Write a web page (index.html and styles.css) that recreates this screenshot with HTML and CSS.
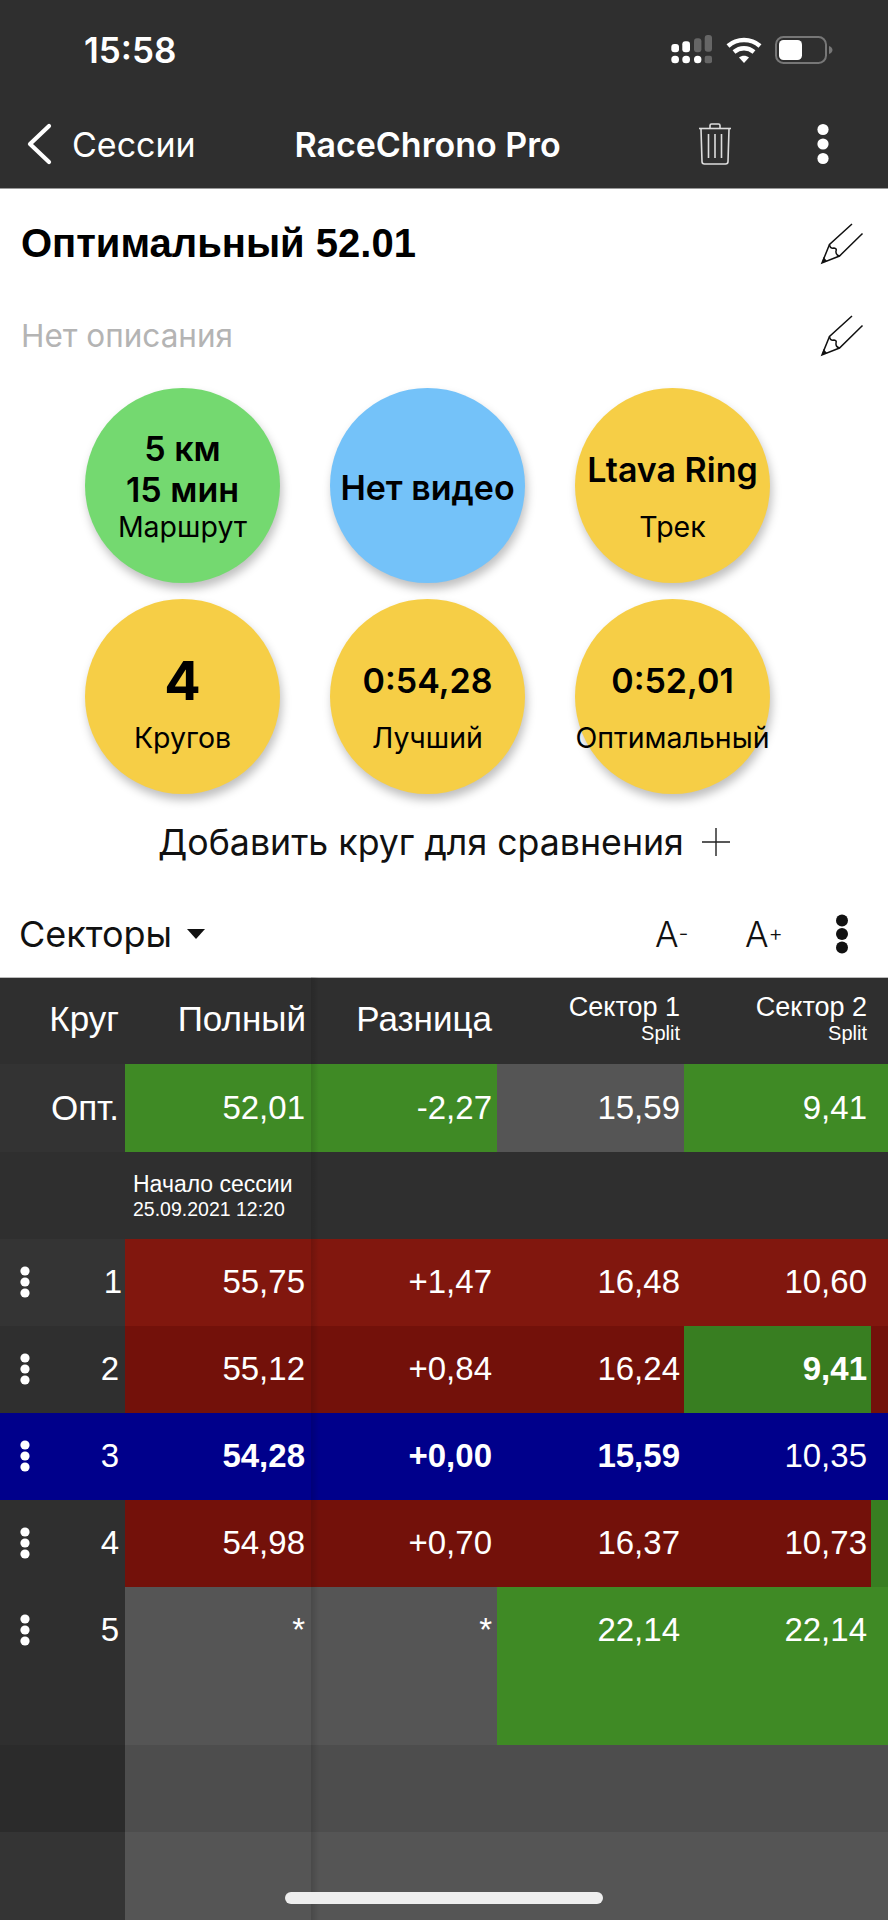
FILE: index.html
```html
<!DOCTYPE html>
<html>
<head>
  <meta charset="UTF-8">
  <title>RaceChrono Pro</title>
  <link rel="stylesheet" href="styles.css">
</head>
<body>

  <header class="top">
    <div class="status">
      <span class="time">15:58</span>
      <div class="status-icons">
        <svg width="42" height="30" viewBox="0 0 42 30">
          <g fill="#fff">
            <rect x="0.3" y="9" width="7.7" height="8.3" rx="3"/>
            <rect x="11.3" y="6.3" width="7.7" height="11" rx="3"/>
            <rect x="0.3" y="20.7" width="7.7" height="7.6" rx="3.6"/>
            <rect x="11.3" y="20.7" width="7.7" height="7.6" rx="3.6"/>
            <rect x="23" y="20.7" width="7.4" height="7.6" rx="3.6"/>
          </g>
          <g fill="#666">
            <rect x="23" y="3.3" width="7.4" height="14" rx="3"/>
            <rect x="33.7" y="0" width="7.3" height="16.7" rx="3"/>
            <rect x="33.7" y="20.7" width="7.3" height="7.6" rx="2"/>
          </g>
        </svg>
        <svg class="wifi" width="36" height="26" viewBox="0 0 36 26">
          <path d="M2 9 C11 1 25 1 34 9" fill="none" stroke="#fff" stroke-width="4.4"/>
          <path d="M8 15 C14 10 22 10 28 15" fill="none" stroke="#fff" stroke-width="4.4"/>
          <path d="M13 20.5 C16 18.2 20 18.2 23 20.5 L18 26 Z" fill="#fff"/>
        </svg>
        <svg class="battery" width="58" height="28" viewBox="0 0 58 28">
          <rect x="1" y="1" width="50" height="26" rx="7.5" fill="none" stroke="#777" stroke-width="2"/>
          <rect x="4" y="4" width="23" height="20" rx="4.5" fill="#fff"/>
          <path d="M54 10 C56.5 11 57.5 12.5 57.5 14 C57.5 15.5 56.5 17 54 18 Z" fill="#777"/>
        </svg>
      </div>
    </div>
    <nav class="nav">
      <div class="nav-left">
        <svg width="26" height="42" viewBox="0 0 26 42">
          <path d="M23 3 L4 21 L23 39" fill="none" stroke="#fff" stroke-width="4.2" stroke-linecap="round" stroke-linejoin="round"/>
        </svg>
        <span>Сессии</span>
      </div>
      <div class="nav-title">RaceChrono Pro</div>
      <div class="nav-right">
        <svg width="34" height="42" viewBox="0 0 34 42">
          <g fill="none" stroke="#ddd" stroke-width="1.6">
            <path d="M1 5.5 H33"/>
            <path d="M12 5 V2.5 Q12 1 13.5 1 H20.5 Q22 1 22 2.5 V5"/>
            <path d="M3 6 L4 38.5 Q4 41 6.5 41 H27.5 Q30 41 30 38.5 L31 6"/>
            <path d="M10.5 11 V35 M17 11 V35 M23.5 11 V35"/>
          </g>
        </svg>
        <svg width="12" height="42" viewBox="0 0 12 42">
          <circle cx="6" cy="6.5" r="5.6" fill="#fff"/>
          <circle cx="6" cy="21" r="5.6" fill="#fff"/>
          <circle cx="6" cy="35.5" r="5.6" fill="#fff"/>
        </svg>
      </div>
    </nav>
  </header>

  <section class="info">
    <div class="title-row">
      <h1>Оптимальный 52.01</h1>
      <svg class="pencil" width="44" height="44" viewBox="0 0 44 44">
        <g fill="none" stroke="#111" stroke-width="1.5">
          <path d="M32 3 L9.5 23.5 L2 42 L19.5 35 L42.5 12.5"/>
          <path d="M9.5 23.5 Q10 28 14 27 Q17 27.5 16 30 Q15.5 34 19.5 35"/>
        </g>
        <path d="M2 42 L3.5 36 L7 40 Z" fill="#111"/>
      </svg>
    </div>
    <div class="desc-row">
      <span>Нет описания</span>
      <svg class="pencil" width="44" height="44" viewBox="0 0 44 44">
        <g fill="none" stroke="#111" stroke-width="1.5">
          <path d="M32 3 L9.5 23.5 L2 42 L19.5 35 L42.5 12.5"/>
          <path d="M9.5 23.5 Q10 28 14 27 Q17 27.5 16 30 Q15.5 34 19.5 35"/>
        </g>
        <path d="M2 42 L3.5 36 L7 40 Z" fill="#111"/>
      </svg>
    </div>

    <div class="circles">
      <div class="circle green">
        <div class="value">5 км<br>15 мин</div>
        <div class="label">Маршрут</div>
      </div>
      <div class="circle blue">
        <div class="value only">Нет видео</div>
      </div>
      <div class="circle yellow">
        <div class="value">Ltava Ring</div>
        <div class="label">Трек</div>
      </div>
      <div class="circle yellow">
        <div class="value big">4</div>
        <div class="label">Кругов</div>
      </div>
      <div class="circle yellow">
        <div class="value">0:54,28</div>
        <div class="label">Лучший</div>
      </div>
      <div class="circle yellow">
        <div class="value">0:52,01</div>
        <div class="label">Оптимальный</div>
      </div>
    </div>

    <div class="add-row">
      <span>Добавить круг для сравнения</span>
      <svg width="28" height="28" viewBox="0 0 28 28">
        <path d="M0 14 H28 M14 0 V28" stroke="#222" stroke-width="1.4"/>
      </svg>
    </div>

    <div class="toolbar">
      <div class="toolbar-left">
        <span>Секторы</span>
        <svg width="18" height="10" viewBox="0 0 18 10"><path d="M0 0 H18 L9 10 Z" fill="#111"/></svg>
      </div>
      <div class="toolbar-right">
        <span class="font-btn">A<small>-</small></span>
        <span class="font-btn">A<small>+</small></span>
        <svg width="14" height="40" viewBox="0 0 14 40">
          <circle cx="7" cy="6.5" r="6" fill="#111"/>
          <circle cx="7" cy="20" r="6" fill="#111"/>
          <circle cx="7" cy="33.5" r="6" fill="#111"/>
        </svg>
      </div>
    </div>
  </section>

  <section class="table">
    <div class="row head">
      <div class="cell">Круг</div>
      <div class="cell">Полный</div>
      <div class="cell">Разница</div>
      <div class="cell stack"><span>Сектор 1</span><small>Split</small></div>
      <div class="cell stack"><span>Сектор 2</span><small>Split</small></div>
      <div class="cell"></div>
    </div>

    <div class="row opt">
      <div class="cell side">Опт.</div>
      <div class="cell bg-green">52,01</div>
      <div class="cell bg-green">-2,27</div>
      <div class="cell bg-gray">15,59</div>
      <div class="cell bg-green">9,41</div>
      <div class="cell bg-green"></div>
    </div>

    <div class="row session">
      <div class="session-text">
        <span>Начало сессии</span>
        <small>25.09.2021 12:20</small>
      </div>
    </div>

    <div class="row lap">
      <div class="cell side lighter"><svg class="dots" width="10" height="32" viewBox="0 0 10 32"><circle cx="5" cy="5" r="4.6"/><circle cx="5" cy="16" r="4.6"/><circle cx="5" cy="27" r="4.6"/></svg><span class="num one">1</span></div>
      <div class="cell bg-red1">55,75</div>
      <div class="cell bg-red1">+1,47</div>
      <div class="cell bg-red1">16,48</div>
      <div class="cell bg-red1">10,60</div>
      <div class="cell bg-red1"></div>
    </div>
    <div class="row lap">
      <div class="cell side"><svg class="dots" width="10" height="32" viewBox="0 0 10 32"><circle cx="5" cy="5" r="4.6"/><circle cx="5" cy="16" r="4.6"/><circle cx="5" cy="27" r="4.6"/></svg><span class="num">2</span></div>
      <div class="cell bg-red2">55,12</div>
      <div class="cell bg-red2">+0,84</div>
      <div class="cell bg-red2">16,24</div>
      <div class="cell bg-green2 strong">9,41</div>
      <div class="cell bg-red2"></div>
    </div>
    <div class="row lap best">
      <div class="cell side"><svg class="dots" width="10" height="32" viewBox="0 0 10 32"><circle cx="5" cy="5" r="4.6"/><circle cx="5" cy="16" r="4.6"/><circle cx="5" cy="27" r="4.6"/></svg><span class="num">3</span></div>
      <div class="cell strong">54,28</div>
      <div class="cell strong">+0,00</div>
      <div class="cell strong">15,59</div>
      <div class="cell">10,35</div>
      <div class="cell"></div>
    </div>
    <div class="row lap">
      <div class="cell side"><svg class="dots" width="10" height="32" viewBox="0 0 10 32"><circle cx="5" cy="5" r="4.6"/><circle cx="5" cy="16" r="4.6"/><circle cx="5" cy="27" r="4.6"/></svg><span class="num">4</span></div>
      <div class="cell bg-red2">54,98</div>
      <div class="cell bg-red2">+0,70</div>
      <div class="cell bg-red2">16,37</div>
      <div class="cell bg-red2">10,73</div>
      <div class="cell bg-green2"></div>
    </div>
    <div class="row lap tall">
      <div class="cell side"><svg class="dots" width="10" height="32" viewBox="0 0 10 32"><circle cx="5" cy="5" r="4.6"/><circle cx="5" cy="16" r="4.6"/><circle cx="5" cy="27" r="4.6"/></svg><span class="num">5</span></div>
      <div class="cell bg-gray">*</div>
      <div class="cell bg-gray">*</div>
      <div class="cell bg-green">22,14</div>
      <div class="cell bg-green">22,14</div>
      <div class="cell bg-green"></div>
    </div>

    <div class="row empty dark">
      <div class="cell side darker"></div>
      <div class="fill"></div>
    </div>
    <div class="row empty last">
      <div class="cell side lighter"></div>
      <div class="fill"></div>
    </div>

    <!-- shadow of the frozen columns, lies over the rows -->
    <div class="freeze-shadow"></div>
    <div class="home-bar"></div>
  </section>

</body>
</html>
```

FILE: styles.css
```css
* {
  box-sizing: border-box;
}

html, body {
  margin: 0;
  padding: 0;
}

body {
  width: 888px;
  height: 1920px;
  overflow: hidden;
  background-color: #fff;
  font-family: Inter, "Noto Sans", sans-serif;
  color: #111;
}

svg {
  display: block;
  flex: none;
}

/* top bar */
.top {
  background-color: #2f2f2f;
  color: #fff;
  border-bottom: 1px solid #999;
  height: 189px;
}

.status {
  height: 100px;
  display: flex;
  align-items: center;
  justify-content: space-between;
  padding: 0 55px 0 84px;
}

.time {
  font-size: 35px;
  font-weight: 600;
}

.status-icons {
  display: flex;
  align-items: center;
  gap: 13px;
}

.nav {
  height: 88px;
  display: grid;
  grid-template-columns: 1fr auto 1fr;
  align-items: center;
  padding: 0 59px 0 26px;
}

.nav-left {
  display: flex;
  align-items: center;
  gap: 20px;
  font-size: 34px;
}

.nav-title {
  font-size: 34px;
  font-weight: 600;
}

.nav-right {
  display: flex;
  justify-content: flex-end;
  align-items: center;
  gap: 85px;
}

/* white part */
.title-row,
.desc-row {
  display: flex;
  align-items: center;
  justify-content: space-between;
  padding: 0 24px 0 21px;
}

.title-row {
  height: 108px;
}

h1 {
  margin: 0;
  font-family: "Liberation Sans", Arial, sans-serif;
  font-size: 40px;
  font-weight: bold;
  color: #000;
}

.desc-row {
  height: 76px;
  font-size: 31.5px;
  color: #b4b4b4;
}

.circles {
  display: grid;
  grid-template-columns: repeat(3, 195px);
  column-gap: 50px;
  row-gap: 16px;
  margin: 15px 0 0 85px;
}

.circle {
  width: 195px;
  height: 195px;
  border-radius: 50%;
  padding-top: 41px;
  text-align: center;
  white-space: nowrap;
  box-shadow: 2px 6px 10px rgba(0, 0, 0, 0.25);
  color: #000;
}

.green { background-color: #74d970; }
.blue { background-color: #74c2f9; }
.yellow { background-color: #f6ce46; }

.value {
  height: 80px;
  display: flex;
  align-items: center;
  justify-content: center;
  font-size: 34px;
  font-weight: 600;
  line-height: 41px;
}

.value.only {
  height: 116px;
}

.value.big {
  font-size: 54px;
  font-weight: 700;
}

.label {
  font-size: 28.5px;
  line-height: 36px;
  display: flex;
  justify-content: center;
}

.add-row {
  height: 96px;
  display: flex;
  align-items: center;
  justify-content: center;
  gap: 18px;
  font-size: 35.7px;
}

.toolbar {
  height: 87px;
  display: flex;
  align-items: center;
  justify-content: space-between;
  padding: 0 39px 0 19px;
  font-size: 36px;
}

.toolbar-left {
  display: flex;
  align-items: center;
  gap: 15px;
}

.toolbar-right {
  display: flex;
  align-items: center;
}

.font-btn {
  font-size: 35px;
  font-weight: 300;
  width: 90px;
}

.font-btn small {
  font-size: 22px;
  vertical-align: 6px;
}

/* table */
.table {
  position: relative;
  height: 943px;
  background-color: #2f2f2f;
  color: #fff;
  font-family: "Liberation Sans", Arial, sans-serif;
  font-size: 33px;
}

.row {
  display: grid;
  grid-template-columns: 125px 186px 186px 187px 187px 17px;
  height: 87px;
}

.cell {
  text-align: right;
  padding-right: 6px;
  line-height: 85px;
  white-space: nowrap;
}

.row > .cell:nth-child(3) { padding-right: 5px; }
.row > .cell:nth-child(4),
.row > .cell:nth-child(5) { padding-right: 4px; }

.head {
  border-top: 1px solid #bbb;
}

.head .cell {
  font-size: 35px;
  line-height: 81px;
}

.head > .cell:nth-child(2) {
  padding-right: 5px;
}

.head .stack {
  display: flex;
  flex-direction: column;
  align-items: flex-end;
  padding-top: 14px;
  font-size: 27px;
  line-height: 30px;
}

.stack small {
  font-size: 20px;
  line-height: 22px;
}

.opt {
  height: 88px;
}

.opt .cell {
  line-height: 88px;
}

.opt > .side {
  display: block;
  font-size: 35px;
  background-color: #333;
}

.session {
  display: block;
  padding: 19px 0 0 133px;
}

.session-text {
  display: flex;
  flex-direction: column;
  font-size: 23px;
  line-height: 27px;
}

.session-text small {
  font-size: 19.5px;
  line-height: 22px;
}

.side {
  background-color: #2f2f2f;
  display: flex;
  justify-content: space-between;
  align-items: flex-start;
  padding-left: 20px;
  height: 100%;
}

.side.lighter { background-color: #343434; }
.side.darker { background-color: #2b2b2b; }

.num.one {
  margin-right: -3px;
}

.dots {
  fill: #fff;
  margin-top: 27px;
}

.bg-green { background-color: #3f8a25; }
.bg-green2 { background-color: #387e21; }
.bg-gray { background-color: #555; }
.bg-red1 { background-color: #81170e; }
.bg-red2 { background-color: #73110a; }

.best { background-color: #00008b; }
.best .side { background-color: transparent; }

.strong { font-weight: bold; }

.tall {
  height: 158px;
}

.empty {
  grid-template-columns: 125px 1fr;
}

.dark .fill { background-color: #4d4d4d; }
.last .fill { background-color: #555; }

.last {
  height: 88px;
}

.freeze-shadow {
  position: absolute;
  top: 0;
  bottom: 0;
  left: 311px;
  width: 8px;
  background: linear-gradient(to right, rgba(0, 0, 0, 0.14), rgba(0, 0, 0, 0));
}

.home-bar {
  position: absolute;
  left: 285px;
  top: 915px;
  width: 318px;
  height: 12px;
  border-radius: 6px;
  background-color: #eee;
}
```
